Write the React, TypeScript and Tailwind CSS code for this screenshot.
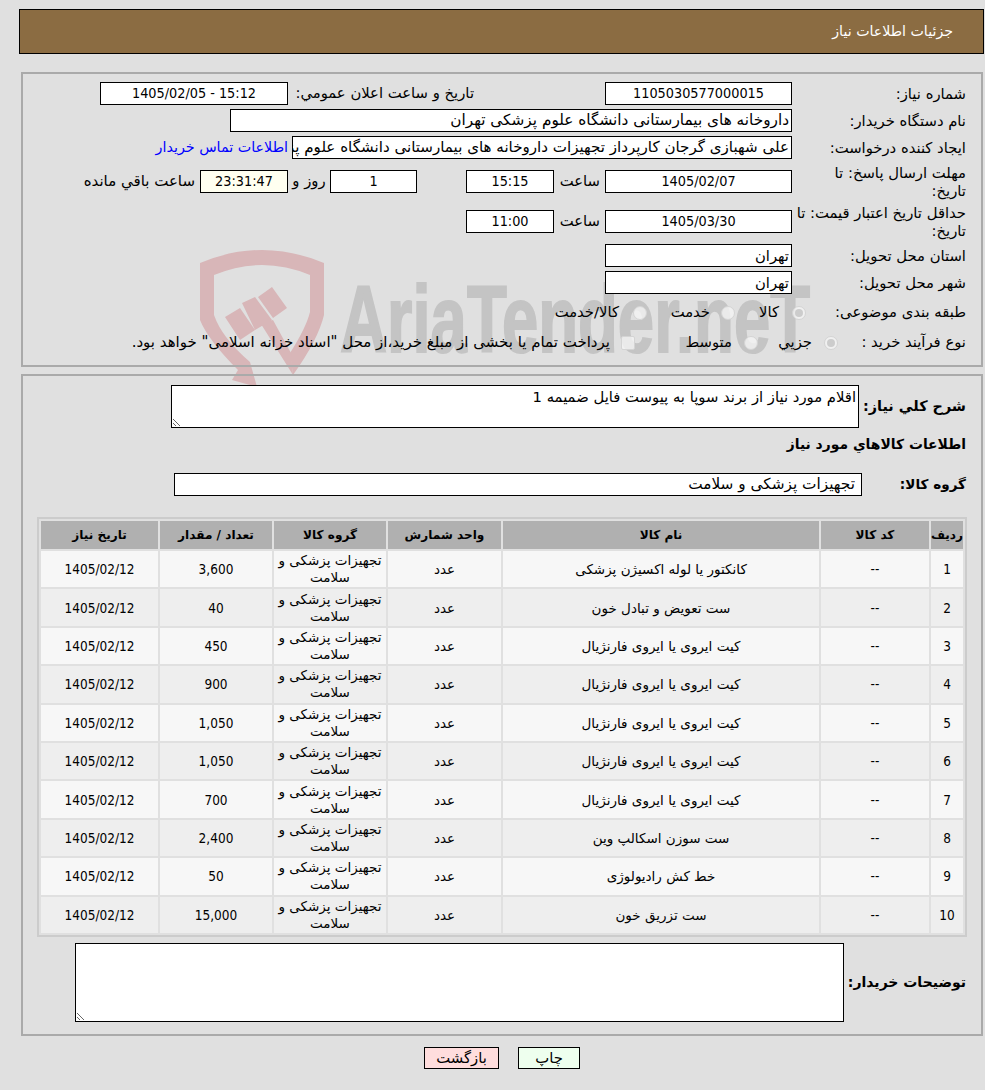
import React from 'react';

const rows = [
  { id: 1, name: 'کانکتور یا لوله اکسیژن پزشکی', qty: '3,600' },
  { id: 2, name: 'ست تعویض و تبادل خون', qty: '40' },
  { id: 3, name: 'کیت ایروی یا ایروی فارنژیال', qty: '450' },
  { id: 4, name: 'کیت ایروی یا ایروی فارنژیال', qty: '900' },
  { id: 5, name: 'کیت ایروی یا ایروی فارنژیال', qty: '1,050' },
  { id: 6, name: 'کیت ایروی یا ایروی فارنژیال', qty: '1,050' },
  { id: 7, name: 'کیت ایروی یا ایروی فارنژیال', qty: '700' },
  { id: 8, name: 'ست سوزن اسکالپ وین', qty: '2,400' },
  { id: 9, name: 'خط کش رادیولوژی', qty: '50' },
  { id: 10, name: 'ست تزریق خون', qty: '15,000' },
];

const digits = "font-['DejaVu_Sans_Condensed','Liberation_Sans',sans-serif]";

const Field = ({ className = '', children }: { className?: string; children?: React.ReactNode }) => (
  <div className={`h-[23px] shrink-0 border border-black leading-[21px] px-[2px] overflow-hidden whitespace-nowrap ${className}`}>
    {children}
  </div>
);

const Label = ({ children }: { children: React.ReactNode }) => (
  <div className="w-[174px] shrink-0 leading-[18px] whitespace-nowrap">{children}</div>
);

const Radio = ({ checked = false }: { checked?: boolean }) => (
  <span className="w-[14px] h-[14px] shrink-0 rounded-full border border-[#d4d4d4] bg-[#f4f4f4]/80 flex items-center justify-center">
    {checked && <span className="w-[8px] h-[8px] rounded-full bg-[#cccccc]" />}
  </span>
);

const Watermark = () => (
  <svg dir="ltr" className="absolute left-[190px] top-[240px] pointer-events-none" width="640" height="146" viewBox="0 0 640 146">
    <path d="M10 23 Q72 -3 134 23 L134 75 Q128 100 103 135 L100 113 Q116 88 120 72 L120 35 Q72 15 24 35 L24 75 Q32 98 60 122 L67 147 L42 140 L48 130 Q18 100 10 80 Z" fill="#d8b6b8" />
    <path d="M35 77 L50 68 L65 90 L50 100 Z M52 63 L65 57 L82 80 L65 90 Z M68 57 L82 47 L97 68 L83 78 Z M71 84 L83 80 L101 113 L103 135 Z" fill="#d8b6b8" />
    <text x="150" y="112" direction="ltr" fontFamily="'Liberation Sans', sans-serif" fontWeight="700" fontSize="95" fill="#c4c4c4" stroke="#c4c4c4" strokeWidth="2" textLength="470" lengthAdjust="spacingAndGlyphs">AriaTender.neT</text>
  </svg>
);

export default function App() {
  return (
    <div dir="rtl" className="relative w-[985px] h-[1090px] overflow-hidden bg-[#e0e0e0] text-[14.8px] text-black font-['Tahoma','DejaVu_Sans','Liberation_Sans',sans-serif]">
      <Watermark />

      {/* Title bar */}
      <div className="pt-[9px] pr-px pl-[19px]">
        <div className="h-[45px] bg-[#8b6c42] border border-black text-white text-[14.2px] leading-[43px] pr-[30px]">جزئیات اطلاعات نیاز</div>
      </div>

      {/* Top panel */}
      <div className="relative mt-[18px] mr-[2px] ml-[21px] h-[295px] border-2 border-[#aaaaaa] pr-[15px] pt-[8px]">
        <div className="flex items-center h-[23px] mb-[4px]">
          <Label>شماره نیاز:</Label>
          <Field className={`w-[187px] bg-white text-center text-[14.3px] ${digits}`}>1105030577000015</Field>
          <div className="w-[317px] shrink-0 pr-[131px] whitespace-nowrap">تاریخ و ساعت اعلان عمومي:</div>
          <Field className={`w-[188px] bg-white text-center text-[14.3px] ${digits}`}>15:12 - 1405/02/05</Field>
        </div>
        <div className="flex items-center h-[23px] mb-[4px]">
          <Label>نام دستگاه خریدار:</Label>
          <Field className="w-[562px] bg-white text-[15.3px]">داروخانه های بیمارستانی دانشگاه علوم پزشکی تهران</Field>
        </div>
        <div className="flex items-center h-[23px] mb-[4px]">
          <Label>ایجاد کننده درخواست:</Label>
          <Field className="w-[500px] bg-white text-[15.1px]">علی شهبازی گرجان کارپرداز تجهیزات داروخانه های بیمارستانی دانشگاه علوم پزشکی تهران</Field>
          <a className="mr-[4px] text-[14.3px] text-[#0000ff] whitespace-nowrap">اطلاعات تماس خریدار</a>
        </div>
        <div className="flex items-center h-[37px] mb-[3px]">
          <Label>مهلت ارسال پاسخ: تا<br />تاریخ:</Label>
          <Field className={`w-[187px] bg-white text-center text-[14.3px] ${digits}`}>1405/02/07</Field>
          <div className="w-[51px] shrink-0 pr-[5px]">ساعت</div>
          <Field className={`w-[88px] bg-white text-center text-[14.3px] ${digits}`}>15:15</Field>
          <div className="w-[49px] shrink-0" />
          <Field className={`w-[87px] bg-white text-center text-[14.3px] ${digits}`}>1</Field>
          <div className="w-[42px] shrink-0 text-center">روز و</div>
          <Field className={`w-[88px] bg-[#fffff0] text-center text-[14.3px] ${digits}`}>23:31:47</Field>
          <div className="pr-[5px] text-[15px] whitespace-nowrap">ساعت باقي مانده</div>
        </div>
        <div className="flex items-center h-[37px] mb-[4px]">
          <Label>حداقل تاریخ اعتبار قیمت: تا<br />تاریخ:</Label>
          <Field className={`w-[187px] bg-white text-center text-[14.3px] ${digits}`}>1405/03/30</Field>
          <div className="w-[51px] shrink-0 pr-[5px]">ساعت</div>
          <Field className={`w-[88px] bg-white text-center text-[14.3px] ${digits}`}>11:00</Field>
        </div>
        <div className="flex items-center h-[23px] mb-[4px]">
          <Label>استان محل تحویل:</Label>
          <Field className="w-[187px] bg-white">تهران</Field>
        </div>
        <div className="flex items-center h-[23px] mb-[7px]">
          <Label>شهر محل تحویل:</Label>
          <Field className="w-[187px] bg-white">تهران</Field>
        </div>
        <div className="flex items-center h-[23px] mb-[7px]">
          <div className="w-[160px] shrink-0">طبقه بندی موضوعی:</div>
          <Radio checked />
          <span className="w-[57px] shrink-0 pr-[13px]">کالا</span>
          <Radio />
          <span className="w-[74px] shrink-0 pr-[11px]">خدمت</span>
          <Radio />
          <span className="pr-[14px]">کالا/خدمت</span>
        </div>
        <div className="flex items-center h-[23px]">
          <div className="w-[128px] shrink-0">نوع فرآیند خرید :</div>
          <Radio checked />
          <span className="w-[66px] shrink-0 pr-[12px]">جزيي</span>
          <Radio />
          <span className="w-[109px] shrink-0 pr-[12px]">متوسط</span>
          <span className="w-[14px] h-[14px] shrink-0 rounded-[2px] border border-[#d4d4d4] bg-[#f4f4f4]/80" />
          <span className="pr-[11px] text-[15px] whitespace-nowrap">پرداخت تمام یا بخشی از مبلغ خرید،از محل "اسناد خزانه اسلامی" خواهد بود.</span>
        </div>
      </div>

      {/* Details panel */}
      <div className="relative mt-[7px] mr-[2px] ml-[21px] h-[662px] border-2 border-[#aaaaaa] pr-[15px] pt-[9px]">
        <div className="flex items-center h-[43px]">
          <div className="w-[107px] shrink-0 font-bold text-[14.4px]">شرح کلي نياز:</div>
          <textarea readOnly defaultValue="اقلام مورد نیاز از برند سوپا به پیوست فایل ضمیمه 1" className="w-[688px] h-[43px] border border-black bg-white px-[2px] leading-[21px] outline-none" />
        </div>
        <div className="h-[30px] mt-[1px] leading-[30px] font-bold text-[13.9px]">اطلاعات کالاهاي مورد نياز</div>
        <div className="flex items-center h-[23px] mt-[14px]">
          <div className="w-[104px] shrink-0 font-bold text-[13.6px]">گروه کالا:</div>
          <Field className="w-[688px] bg-white pr-[6px] text-[15.3px]">تجهیزات پزشکی و سلامت</Field>
        </div>

        <table className="mt-[21px] mr-[-1px] w-[928px] table-fixed border-separate border-spacing-[2px] border-2 border-[#cccccc] text-center text-[13.5px] leading-[18px]">
          <colgroup>
            <col className="w-[32px]" />
            <col className="w-[108px]" />
            <col className="w-[316px]" />
            <col className="w-[113px]" />
            <col className="w-[112px]" />
            <col className="w-[112px]" />
            <col className="w-[117px]" />
          </colgroup>
          <thead>
            <tr className="h-[28px] bg-[#b0b0b0] font-bold text-[12.1px]">
              <th className="p-0">ردیف</th>
              <th className="p-0">کد کالا</th>
              <th className="p-0">نام کالا</th>
              <th className="p-0">واحد شمارش</th>
              <th className="p-0">گروه کالا</th>
              <th className="p-0">تعداد / مقدار</th>
              <th className="p-0">تاریخ نیاز</th>
            </tr>
          </thead>
          <tbody>
            {rows.map((row, idx) => (
              <tr key={row.id} className={`h-[36.4px] ${idx % 2 === 0 ? 'bg-[#f7f7f7]' : 'bg-[#eeeeee]'}`}>
                <td className={`p-0 ${digits}`}>{row.id}</td>
                <td className={`p-0 ${digits}`}>--</td>
                <td className="p-0">{row.name}</td>
                <td className="p-0">عدد</td>
                <td className="p-0 leading-[17px]">تجهیزات پزشکی و سلامت</td>
                <td className={`p-0 ${digits}`}>{row.qty}</td>
                <td className={`p-0 ${digits}`}>1405/02/12</td>
              </tr>
            ))}
          </tbody>
        </table>

        <div className="flex items-center h-[79px] mt-[6px]">
          <div className="w-[122px] shrink-0 font-bold text-[14px] whitespace-nowrap">توضیحات خریدار:</div>
          <textarea readOnly className="w-[769px] h-[79px] border border-black bg-white outline-none" />
        </div>
      </div>

      {/* Actions */}
      <div className="flex gap-[19px] mt-[11px] pr-[405px]">
        <button className="w-[62px] h-[22px] border border-black bg-[#eeffee] leading-[20px]">چاپ</button>
        <button className="w-[75px] h-[22px] border border-black bg-[#ffdddd] leading-[20px]">بازگشت</button>
      </div>
    </div>
  );
}
